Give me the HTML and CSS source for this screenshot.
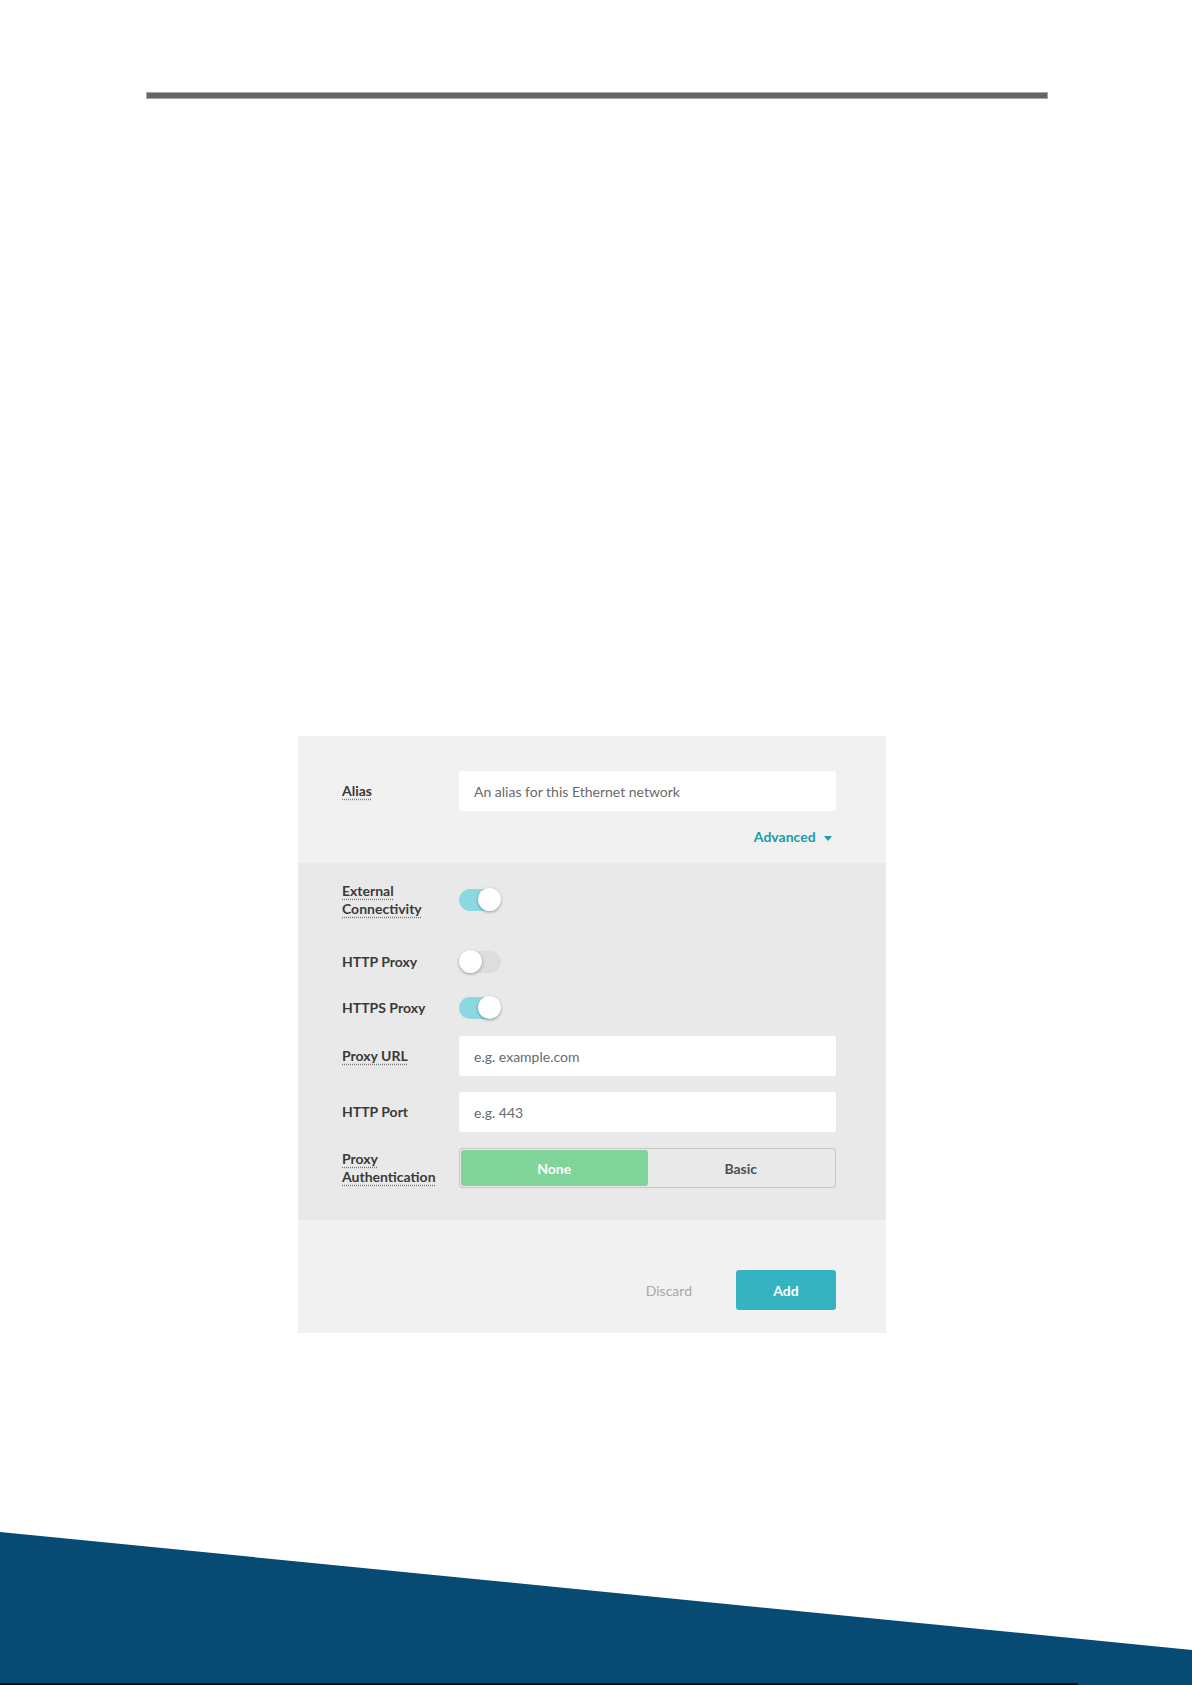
FILE: index.html
```html
<!DOCTYPE html>
<html lang="en">

<head>
    <meta charset="UTF-8">
    <meta name="viewport" content="width=device-width, initial-scale=1.0">
    <title>Add Ethernet network</title>
    <link rel="stylesheet" href="styles.css">
</head>

<body>
    <div class="topbar"></div>

    <form class="panel">
        <div class="section section-main">
            <div class="field field-input">
                <label class="label hint" for="alias">Alias</label>
                <input class="input" id="alias" type="text" placeholder="An alias for this Ethernet network">
            </div>
            <div class="advanced">
                <a class="advanced-link">Advanced <span class="caret"></span></a>
            </div>
        </div>

        <div class="section section-advanced">
            <div class="field field-ext">
                <span class="label"><span class="hint">External Connectivity</span></span>
                <span class="switch on"><span class="knob"></span></span>
            </div>
            <div class="field field-switch field-http">
                <span class="label">HTTP Proxy</span>
                <span class="switch"><span class="knob"></span></span>
            </div>
            <div class="field field-switch field-https">
                <span class="label">HTTPS Proxy</span>
                <span class="switch on"><span class="knob"></span></span>
            </div>
            <div class="field field-input field-url">
                <label class="label" for="proxyUrl"><span class="hint">Proxy URL</span></label>
                <input class="input" id="proxyUrl" type="text" placeholder="e.g. example.com">
            </div>
            <div class="field field-input">
                <label class="label" for="httpPort">HTTP Port</label>
                <input class="input" id="httpPort" type="text" placeholder="e.g. 443">
            </div>
            <div class="field field-input">
                <span class="label"><span class="hint">Proxy Authentication</span></span>
                <div class="segmented">
                    <button type="button" class="seg seg-active">None</button>
                    <button type="button" class="seg">Basic</button>
                </div>
            </div>
        </div>

        <div class="section section-actions">
            <button type="button" class="btn btn-discard">Discard</button>
            <button type="button" class="btn btn-add">Add</button>
        </div>
    </form>

    <div class="wave">
        <div class="wave-line"></div>
    </div>
</body>

</html>
```

FILE: styles.css
```css
body {
    margin: 0;
    background-color: #ffffff;
    font-family: Lato, "Open Sans", Arial, sans-serif;
    font-size: 14px;
    color: #3c3c3c;
}

.topbar {
    margin: 92px 0 0 146px;
    width: 900px;
    height: 5px;
    background-color: #646469;
    border: 1px solid #a6a6aa;
}

.panel {
    margin: 637px 0 0 298px;
    width: 588px;
}

.section {
    padding: 0 50px 0 44px;
}

.section-main {
    background-color: #f1f1f1;
    padding-top: 35px;
    padding-bottom: 17px;
}

.section-advanced {
    background-color: #e9e9e9;
    padding-top: 19px;
    padding-bottom: 32px;
}

.section-actions {
    background-color: #f1f1f1;
    padding-top: 50px;
    padding-bottom: 23px;
    display: flex;
    justify-content: flex-end;
    align-items: center;
}

.field {
    display: grid;
    grid-template-columns: 117px 1fr;
    align-items: center;
}

.field-input {
    min-height: 40px;
    margin-top: 16px;
}

.section-main .field-input {
    margin-top: 0;
}

.field-ext {
    min-height: 36px;
}

.field-switch {
    height: 26px;
}

.field-http {
    margin-top: 31px;
}

.field-https {
    margin-top: 20px;
}

.field-url {
    margin-top: 15px;
}

.label {
    font-weight: bold;
    line-height: 18px;
    color: #3a3a3a;
    padding-right: 14px;
}

.hint {
    text-decoration: underline dotted #777;
    text-underline-offset: 3px;
}

.input {
    height: 40px;
    box-sizing: border-box;
    border: none;
    border-radius: 3px;
    background-color: #ffffff;
    padding: 0 15px;
    font-family: inherit;
    font-size: 14px;
    color: #555;
}

.input::placeholder {
    color: #6a6a6a;
}

.advanced {
    margin-top: 17px;
    text-align: right;
    padding-right: 4px;
    line-height: 18px;
}

.advanced-link {
    color: #1a9caf;
    font-weight: bold;
    cursor: pointer;
}

.caret {
    display: inline-block;
    margin-left: 5px;
    vertical-align: middle;
    border-left: 4.5px solid transparent;
    border-right: 4.5px solid transparent;
    border-top: 5px solid #1a9caf;
}

.switch {
    position: relative;
    display: block;
    width: 42px;
    height: 22px;
    border-radius: 11px;
    background-color: #dedddb;
}

.switch.on {
    background-color: #8cd8e2;
}

.knob {
    position: absolute;
    top: -1px;
    left: 0;
    width: 23px;
    height: 23px;
    border-radius: 50%;
    background-color: #ffffff;
    box-shadow: 0 1px 3px rgba(0, 0, 0, 0.35);
}

.switch.on .knob {
    left: 19px;
}

.segmented {
    display: flex;
    height: 40px;
    box-sizing: border-box;
    padding: 1px;
    border: 1px solid #c6c6c6;
    border-radius: 3px;
    background-color: #e9e9e9;
}

.seg {
    flex: 1;
    border: none;
    border-radius: 3px;
    background: transparent;
    font-family: inherit;
    font-size: 14px;
    font-weight: bold;
    color: #505050;
    cursor: pointer;
}

.seg-active {
    background-color: #7fd49a;
    color: #ffffff;
}

.btn {
    border: none;
    font-family: inherit;
    font-size: 14px;
    cursor: pointer;
}

.btn-discard {
    background: transparent;
    color: #a8a8a8;
    padding: 0;
    margin-right: 44px;
}

.btn-add {
    width: 100px;
    height: 40px;
    border-radius: 3px;
    background-color: #36b3c1;
    color: #ffffff;
    font-weight: bold;
}

.wave {
    margin-top: 199px;
    height: 153px;
    background-color: #074a73;
    clip-path: polygon(0 0, 100% 118px, 100% 100%, 0 100%);
    display: flex;
    align-items: flex-end;
}

.wave-line {
    width: 1078px;
    height: 2px;
    background-color: #111;
}
```
